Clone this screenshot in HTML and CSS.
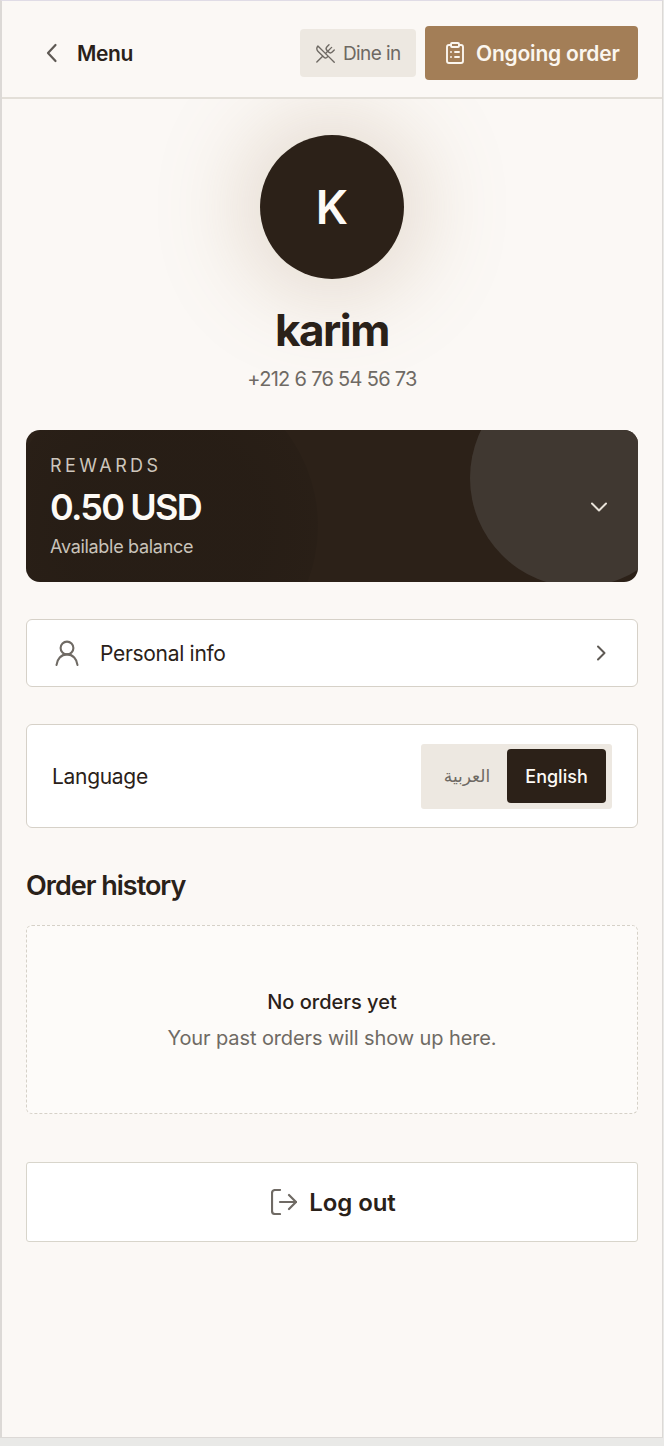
FILE: index.html
```html
<!DOCTYPE html>
<html lang="en">
<head>
  <meta charset="UTF-8">
  <meta name="viewport" content="width=device-width, initial-scale=1.0">
  <title>Profile</title>
  <link rel="stylesheet" href="styles.css">
</head>
<body>
  <div class="app">
    <header class="topbar">
      <div class="topbar-left">
        <svg class="back-icon" viewBox="0 0 12 20" fill="none" stroke="currentColor" stroke-width="2.2" stroke-linecap="round" stroke-linejoin="round"><path d="M9.500 2 2 10l7.500 8"/></svg>
        <span class="menu-label">Menu</span>
      </div>
      <div class="topbar-right">
        <div class="dine-btn">
          <svg class="dine-icon" viewBox="0 0 24 24" fill="none" stroke="currentColor" stroke-width="1.6" stroke-linecap="round" stroke-linejoin="round"><path d="m16 2-2.300 2.300a3 3 0 0 0 0 4.200l1.800 1.800a3 3 0 0 0 4.200 0L22 8"/><path d="M15 15 3.300 3.300a4.200 4.200 0 0 0 0 6l7.300 7.300c.7.7 2 .7 2.800 0L15 15Zm0 0 7 7"/><path d="m2.100 21.800 6.400-6.300"/><path d="m19 5-7 7"/></svg>
          Dine in
        </div>
        <div class="order-btn">
          <svg class="order-icon" viewBox="0 0 24 24" fill="none" stroke="currentColor" stroke-width="1.900" stroke-linecap="round" stroke-linejoin="round"><rect x="8" y="2" width="8" height="4" rx="1"/><path d="M16 4h2a2 2 0 0 1 2 2v14a2 2 0 0 1-2 2H6a2 2 0 0 1-2-2V6a2 2 0 0 1 2-2h2"/><path d="M12 11h4"/><path d="M12 16h4"/><path d="M8 11h.01"/><path d="M8 16h.01"/></svg>
          Ongoing order
        </div>
      </div>
    </header>

    <main class="content">
      <section class="profile">
        <div class="avatar">K</div>
        <h1 class="profile-name">karim</h1>
        <p class="profile-phone">+212 6 76 54 56 73</p>
      </section>

      <section class="rewards">
        <div class="rewards-blob-left"></div>
        <div class="rewards-blob-right"></div>
        <div class="rewards-text">
          <div class="rewards-label">REWARDS</div>
          <div class="rewards-amount">0.50 USD</div>
          <div class="rewards-note">Available balance</div>
        </div>
        <svg class="rewards-chevron" viewBox="0 0 18 12" fill="none" stroke="currentColor" stroke-width="2" stroke-linecap="round" stroke-linejoin="round"><path d="m2 2.500 7 7 7-7"/></svg>
      </section>

      <section class="row-card info-row">
        <svg class="user-icon" viewBox="0 0 24 26" fill="none" stroke="currentColor" stroke-width="2.1" stroke-linecap="round"><circle cx="12" cy="8" r="6.400"/><path d="M1.500 25c.6-6 4.600-10.600 10.500-10.600S21.900 19 22.500 25"/></svg>
        <span class="row-label">Personal info</span>
        <svg class="row-chevron" viewBox="0 0 10 16" fill="none" stroke="currentColor" stroke-width="2" stroke-linecap="round" stroke-linejoin="round"><path d="m2 1.500 6.500 6.500L2 14.500"/></svg>
      </section>

      <section class="row-card language-row">
        <span class="row-label">Language</span>
        <div class="lang-switch">
          <span class="lang-option" lang="ar">العربية</span>
          <span class="lang-option lang-active">English</span>
        </div>
      </section>

      <h2 class="section-title">Order history</h2>
      <section class="empty-orders">
        <div class="empty-title">No orders yet</div>
        <div class="empty-note">Your past orders will show up here.</div>
      </section>

      <div class="logout-btn">
        <svg class="logout-icon" viewBox="0 0 26 26" fill="none" stroke="currentColor" stroke-width="2.200" stroke-linecap="round" stroke-linejoin="round"><path d="M9 25H4a3 3 0 0 1-3-3V4a3 3 0 0 1 3-3h5"/><path d="M9 13h16"/><path d="m18 6 7 7-7 7"/></svg>
        Log out
      </div>
    </main>
  </div>
</body>
</html>
```

FILE: styles.css
```css
* {
  box-sizing: border-box;
}

body {
  margin: 0;
  background-color: #e9e9e7;
  font-family: Inter, "Noto Sans", "DejaVu Sans", sans-serif;
  color: #2a2119;
}

.app {
  width: 663px;
  height: 1438px;
  background-color: #fbf8f5;
  border: 1px solid #dcd9d6;
  border-top-color: #e0dce6;
  border-left-width: 2px;
  overflow: hidden;
}

.topbar {
  position: relative;
  z-index: 1;
  display: flex;
  align-items: center;
  justify-content: space-between;
  height: 98px;
  padding: 8px 24px 0 44px;
  background-color: #fbf8f5;
  border-bottom: 2px solid #e3dfd8;
}

.topbar-left {
  display: flex;
  align-items: center;
  gap: 19px;
}

.back-icon {
  width: 12px;
  height: 20px;
  color: #5e5954;
}

.menu-label {
  font-size: 21px;
  font-weight: 600;
  letter-spacing: -0.4px;
}

.topbar-right {
  display: flex;
  align-items: center;
  gap: 9px;
}

.dine-btn {
  display: flex;
  align-items: center;
  gap: 7px;
  width: 116px;
  height: 48px;
  padding-left: 15px;
  background-color: #ede8e1;
  border-radius: 4px;
  font-size: 19px;
  color: #6e6963;
  letter-spacing: -0.6px;
}

.dine-icon {
  width: 21px;
  height: 21px;
}

.order-btn {
  display: flex;
  align-items: center;
  gap: 9px;
  width: 213px;
  height: 54px;
  padding-left: 18px;
  background-color: #a37e57;
  border-radius: 4px;
  font-size: 21px;
  font-weight: 600;
  color: #fbf6ef;
  letter-spacing: -0.2px;
}

.order-icon {
  width: 24px;
  height: 24px;
}

.content {
  padding: 0 24px;
}

.profile {
  display: flex;
  flex-direction: column;
  align-items: center;
  padding-top: 36px;
}

.avatar {
  display: flex;
  align-items: center;
  justify-content: center;
  width: 144px;
  height: 144px;
  border-radius: 50%;
  background-color: #2c2118;
  box-shadow: 0 0 90px 15px rgba(160, 125, 85, 0.26);
  font-size: 46px;
  font-weight: 600;
  color: #fdfaf6;
}

.profile-name {
  margin: 21px 0 0;
  font-size: 44px;
  line-height: 60px;
  font-weight: 700;
  letter-spacing: -1.5px;
}

.profile-phone {
  margin: 4px 0 0;
  font-size: 20px;
  line-height: 30px;
  color: #6f6a64;
  letter-spacing: -0.7px;
}

.rewards {
  position: relative;
  display: flex;
  align-items: center;
  justify-content: space-between;
  height: 152px;
  margin-top: 36px;
  padding: 2px 30px 0 24px;
  background-color: #2c2118;
  border-radius: 14px;
  overflow: hidden;
}

.rewards-blob-left {
  position: absolute;
  left: -20px;
  top: -60px;
  width: 312px;
  height: 312px;
  border-radius: 50%;
  background: radial-gradient(circle, rgba(20, 16, 12, 0.2) 45%, rgba(20, 16, 12, 0.03) 100%);
}

.rewards-blob-right {
  position: absolute;
  right: -50px;
  top: -61px;
  width: 218px;
  height: 218px;
  border-radius: 50%;
  background-color: #403831;
}

.rewards-text {
  position: relative;
}

.rewards-label {
  font-size: 18px;
  line-height: 24px;
  letter-spacing: 3.4px;
  color: #cdc6bc;
}

.rewards-amount {
  margin-top: 6px;
  font-size: 36px;
  line-height: 46px;
  font-weight: 600;
  letter-spacing: -1.8px;
  color: #fdfaf6;
}

.rewards-note {
  margin-top: 4px;
  font-size: 18px;
  line-height: 26px;
  letter-spacing: -0.3px;
  color: #c9c3ba;
}

.rewards-chevron {
  position: relative;
  width: 18px;
  height: 12px;
  color: #e8e2d9;
}

.row-card {
  display: flex;
  align-items: center;
  background-color: #fff;
  border: 1px solid #d6d1c8;
  border-radius: 6px;
}

.info-row {
  height: 68px;
  margin-top: 37px;
  padding: 0 31px 0 28px;
}

.user-icon {
  width: 24px;
  height: 26px;
  color: #6f6a64;
}

.row-label {
  font-size: 21px;
  font-weight: 430;
  letter-spacing: -0.3px;
}

.info-row .row-label {
  flex: 1;
  margin-left: 21px;
}

.row-chevron {
  width: 10px;
  height: 16px;
  color: #5e5954;
}

.language-row {
  justify-content: space-between;
  height: 104px;
  margin-top: 37px;
  padding: 0 25px;
}

.lang-switch {
  display: flex;
  align-items: center;
  justify-content: flex-end;
  width: 191px;
  height: 65px;
  padding: 0 6px;
  background-color: #ede8e1;
  border-radius: 3px;
}

.lang-option {
  display: flex;
  flex-shrink: 0;
  align-items: center;
  justify-content: center;
  width: 80px;
  height: 54px;
  font-size: 17px;
  color: #6f6a64;
}

.lang-active {
  width: 99px;
  background-color: #2c2118;
  border-radius: 4px;
  font-size: 18px;
  color: #fdfaf6;
  font-weight: 500;
}

.section-title {
  margin: 39px 0 0;
  font-size: 27px;
  line-height: 38px;
  font-weight: 600;
  letter-spacing: -1px;
}

.empty-orders {
  display: flex;
  flex-direction: column;
  align-items: center;
  gap: 12px;
  height: 189px;
  margin-top: 20px;
  padding-top: 64px;
  background-color: #fdfbf9;
  border: 1px dashed #d6d1c8;
  border-radius: 6px;
}

.empty-title {
  font-size: 20px;
  line-height: 24px;
  font-weight: 500;
  letter-spacing: 0;
}

.empty-note {
  font-size: 20px;
  line-height: 24px;
  color: #6f6a64;
  letter-spacing: -0.1px;
}

.logout-btn {
  display: flex;
  align-items: center;
  justify-content: center;
  gap: 12px;
  height: 80px;
  margin-top: 48px;
  padding-left: 3px;
  background-color: #fff;
  border: 1px solid #d8d5cb;
  border-radius: 3px;
  font-size: 24px;
  font-weight: 600;
  letter-spacing: -0.1px;
}

.logout-icon {
  width: 26px;
  height: 26px;
  color: #6f6a64;
}
```
